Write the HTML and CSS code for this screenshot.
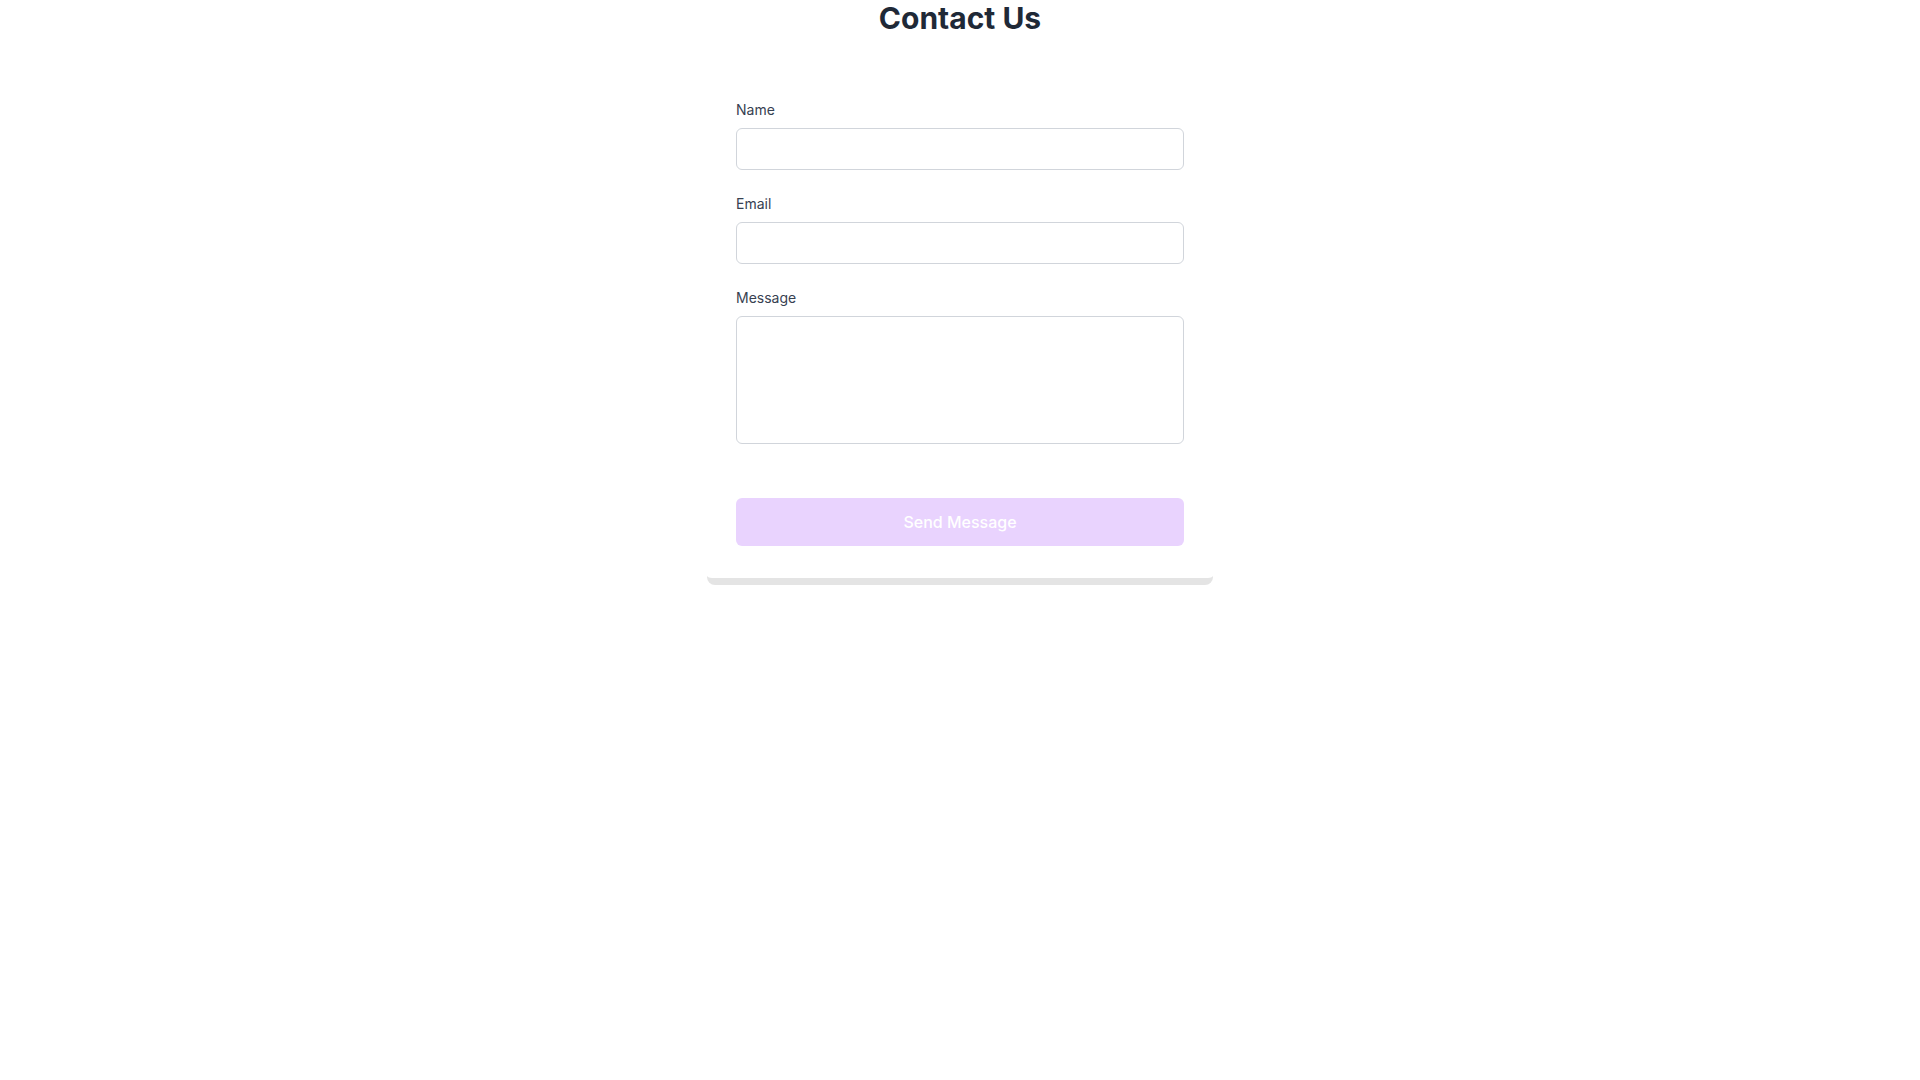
FILE: index.html
```html
<!DOCTYPE html>
<html lang="en">
<head>
  <meta charset="UTF-8" />
  <meta name="viewport" content="width=device-width, initial-scale=1.0" />
  <title>Contact Us</title>
  <link rel="stylesheet" href="styles.css">
</head>
<body>
  <div class="page">
    <h1>Contact Us</h1>

    <!-- contact form card, the outer box gives the grey edge below it -->
    <div class="card-edge">
      <form class="card" onsubmit="return false;">
        <div class="field">
          <label for="name">Name</label>
          <input type="text" id="name" />
        </div>
        <div class="field">
          <label for="email">Email</label>
          <input type="email" id="email" />
        </div>
        <div class="field">
          <label for="message">Message</label>
          <textarea id="message"></textarea>
        </div>
        <div class="actions">
          <button type="submit" class="send-btn" disabled>Send Message</button>
        </div>
      </form>
    </div>
  </div>
</body>
</html>
```

FILE: styles.css
```css
body {
  margin: 0;
  font-family: Inter, "Noto Sans", sans-serif;
  background: #fff;
}
.page {
  display: flex;
  flex-direction: column;
  align-items: center;
}
h1 {
  margin: 0 0 32px;
  font-size: 30px;
  line-height: 36px;
  font-weight: 700;
  color: #1f2937;
  text-align: center;
}
.card-edge {
  width: 506px;
  padding-bottom: 7px;
  background: #e4e4e4;
  border-radius: 8px;
}
.card {
  width: 512px;
  margin: 0 -3px;
  box-sizing: border-box;
  padding: 32px;
  background: #fff;
  border-radius: 8px;
}
.field {
  margin-bottom: 24px;
}
label {
  display: block;
  margin-bottom: 8px;
  font-size: 14px;
  line-height: 20px;
  font-weight: 400;
  color: #374151;
}
input,
textarea {
  display: block;
  width: 100%;
  height: 42px;
  box-sizing: border-box;
  padding: 8px 12px;
  border: 1px solid #d1d5db;
  border-radius: 6px;
  font-family: inherit;
  font-size: 16px;
  line-height: 24px;
  color: #111827;
  background: #fff;
}
textarea {
  height: 128px;
  resize: none;
}
.actions {
  padding-top: 30px;
}
.send-btn {
  display: block;
  width: 100%;
  height: 48px;
  border: none;
  border-radius: 6px;
  background: #e9d3fe;
  color: #fff;
  font-family: inherit;
  font-size: 16px;
  line-height: 24px;
  font-weight: 500;
  cursor: not-allowed;
}
```
